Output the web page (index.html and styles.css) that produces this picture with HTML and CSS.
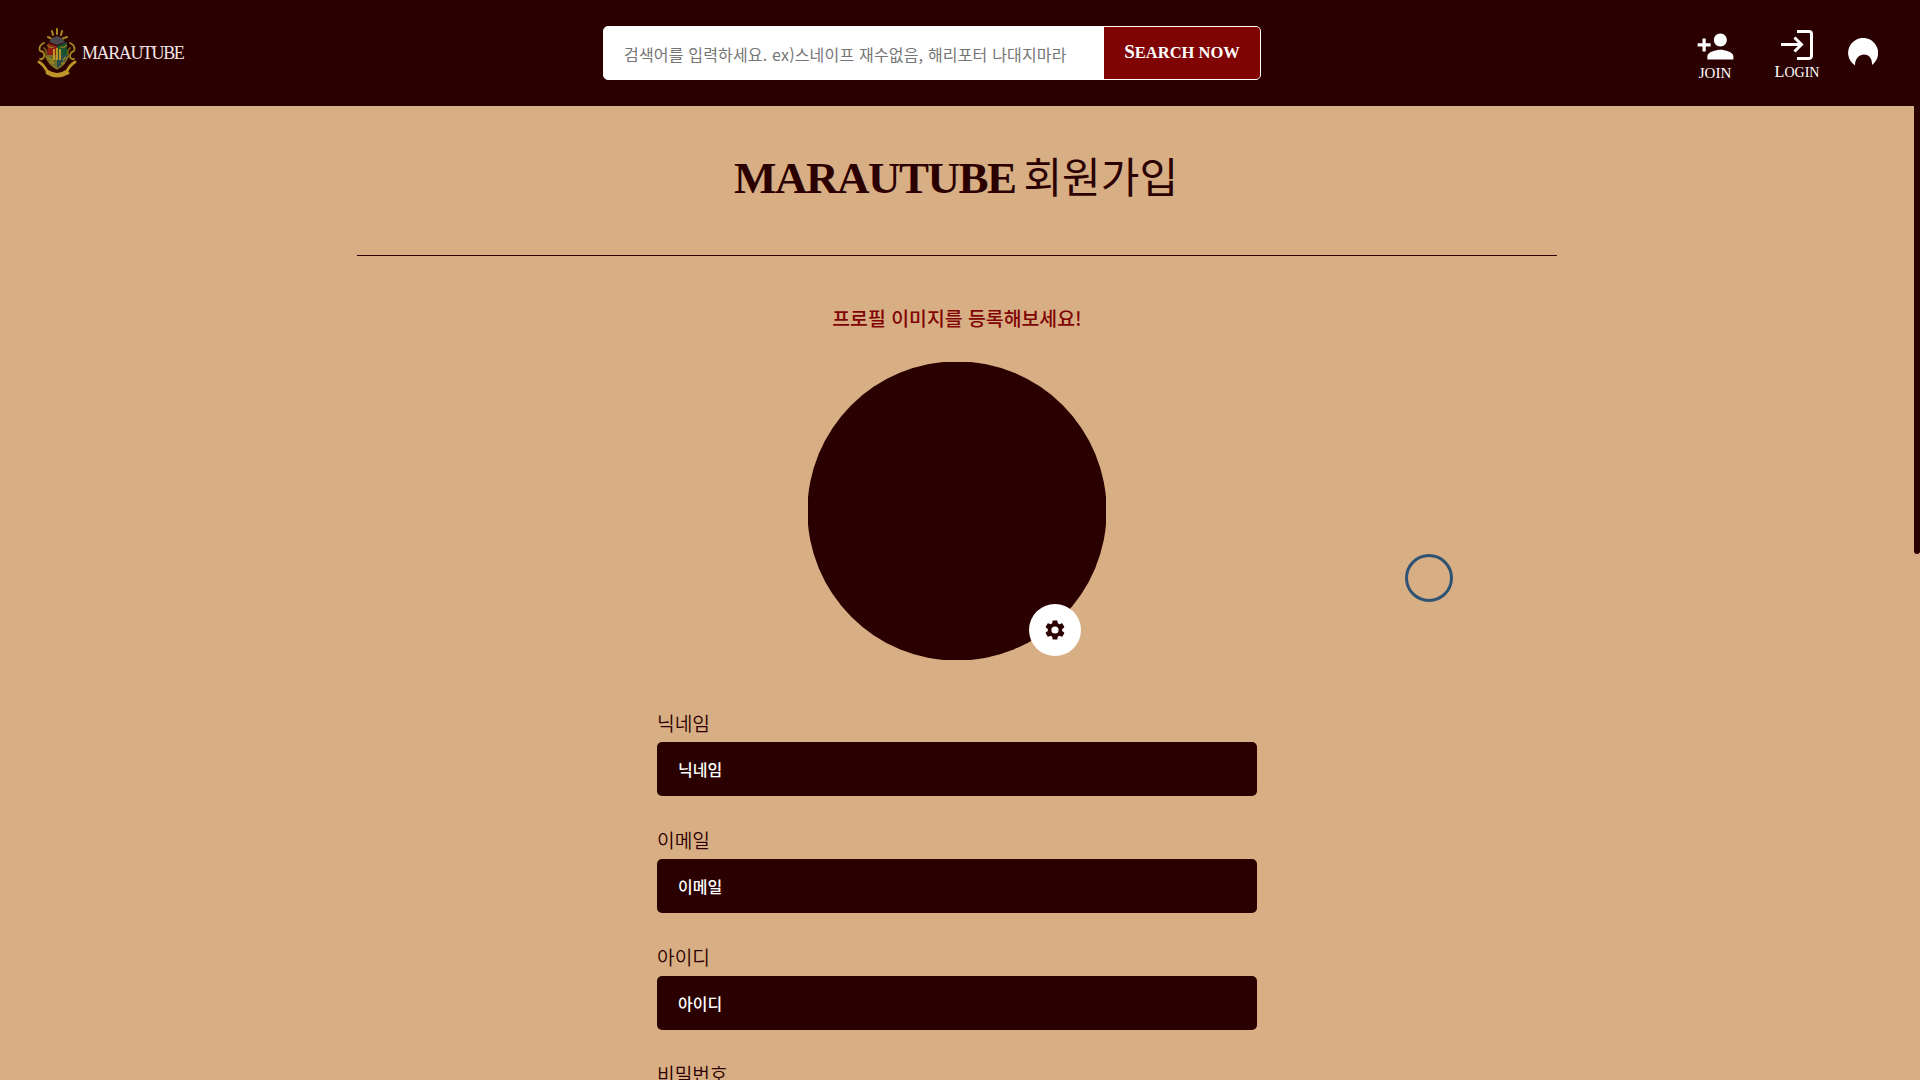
FILE: index.html
```html
<!DOCTYPE html>
<html lang="ko">
<head>
<meta charset="utf-8">
<title>MARAUTUBE 회원가입</title>
<link rel="stylesheet" href="styles.css">
</head>
<body>
<header class="header">
  <a class="logo">
    <svg class="crest" viewBox="0 0 42 50">
      <g fill="none" stroke="#a98a20" stroke-width="1.8" stroke-linecap="round">
        <path d="M16 3l1 4M21 1v5M26 3l-1 4M12 9l4 2M31 9l-5 2" stroke-width="2" stroke-dasharray="2.500 1"/>
        <path d="M8 15q-6 3-4 8q5 0 4 6q-2 3-4 2M34 15q6 3 4 8q-4 1-4 6q2 3 4 2" stroke-dasharray="4 1"/>
        <path d="M8 20q4 3 1 9M34 20q-4 4-1 9" stroke="#6f5a16"/>
        <path d="M3 34q4 2 8 9q10 7 20 0q3-6 8-9M11 45q10 6 21 0" stroke="#bd9529" stroke-width="2.800"/>
      </g>
      <path d="M16 10l5-2l5 2l3 4l-8 3l-8-3z" fill="#4b484b"/>
      <path d="M12 15l9 3v9H11z" fill="#8f1d13"/>
      <path d="M21 18l10-4v13H21z" fill="#17532f"/>
      <path d="M10 27h11v14Q12 37 10 27z" fill="#6d6d2c"/>
      <path d="M21 27h11q-2 10-11 14z" fill="#2b4c4b"/>
      <path d="M11 17q4 4 7 2M31 17q-4 4-7 2M10 28q2 8 11 13q9-5 11-13" fill="none" stroke="#8c781e" stroke-width="1.300"/>
      <path d="M18 21v11M21 20v12M24 21v11" stroke="#c99d25" stroke-width="1.800"/>
      <path d="M12 30l5 3M27 32l3-3M14 34l4 1M25 36l3-2" stroke="#a98a20" stroke-width="1.300"/>
    </svg>
    <span class="logo-text">MARAUTUBE</span>
  </a>
  <form class="search">
    <input class="search-input" type="text" placeholder="검색어를 입력하세요. ex)스네이프 재수없음, 해리포터 나대지마라">
    <button class="search-button" type="button"><span class="initial">S</span>EARCH NOW</button>
  </form>
  <nav class="menu">
    <a class="menu-item">
      <svg viewBox="0 0 24 24"><path d="M15 12c2.21 0 4-1.79 4-4s-1.79-4-4-4-4 1.79-4 4 1.79 4 4 4zm-9-2V7H4v3H1v2h3v3h2v-3h3v-2H6zm9 4c-2.67 0-8 1.34-8 4v2h16v-2c0-2.66-5.33-4-8-4z"/></svg>
      <span class="join">JOIN</span>
    </a>
    <a class="menu-item">
      <svg class="login-icon" viewBox="0 0 32 30"><path d="M16 1.500h12a2.500 2.500 0 0 1 2.500 2.500v22a2.500 2.500 0 0 1-2.500 2.500H16M0 14.500h20M13.500 7.500l7 7-7 7"/></svg>
      <span class="login"><span class="initial">L</span>OGIN</span>
    </a>
    <svg class="moon" viewBox="0 0 30 30"><path d="M7 27.500A15 15 0 1 1 24 27C25 13 7 13 7 27.500z"/></svg>
  </nav>
</header>
<main class="page">
  <h1 class="title"><span class="brand">MARAUTUBE</span><span>회원가입</span></h1>
  <p class="prompt">프로필 이미지를 등록해보세요!</p>
  <div class="profile">
    <svg class="avatar" viewBox="0 0 298 298"><circle cx="149" cy="149" r="149.600"/></svg>
    <button class="settings" type="button">
      <svg viewBox="0 0 24 24"><path d="M19.140 12.940c.04-.3.060-.61.060-.94s-.02-.64-.07-.94l2.030-1.580a.49.49 0 0 0 .12-.61l-1.920-3.320a.488.488 0 0 0-.59-.22l-2.390.96c-.5-.38-1.030-.7-1.620-.94l-.36-2.540a.484.484 0 0 0-.48-.41h-3.840c-.24 0-.43.17-.47.41l-.36 2.540c-.59.24-1.130.57-1.620.94l-2.390-.96c-.22-.08-.47 0-.59.22L2.740 8.870c-.12.21-.08.47.12.61l2.030 1.580c-.05.3-.09.63-.09.94s.02.64.07.94l-2.030 1.580a.49.49 0 0 0-.12.61l1.920 3.320c.12.22.37.29.59.22l2.390-.96c.5.38 1.030.7 1.620.94l.36 2.540c.05.24.24.41.48.41h3.840c.24 0 .44-.17.47-.41l.36-2.540c.59-.24 1.130-.56 1.620-.94l2.390.96c.22.08.47 0 .59-.22l1.920-3.320c.12-.22.070-.47-.12-.61zM12 15.600A3.600 3.600 0 1 1 12 8.400a3.600 3.600 0 0 1 0 7.200z"/></svg>
    </button>
  </div>
  <form class="form">
    <label class="field">닉네임<input type="text" placeholder="닉네임"></label>
    <label class="field">이메일<input type="text" placeholder="이메일"></label>
    <label class="field">아이디<input type="text" placeholder="아이디"></label>
    <label class="field">비밀번호</label>
  </form>
</main>
<div class="scroll-thumb"></div>
<div class="cursor-ring"></div>
</body>
</html>
```
FILE: styles.css
```css
* { box-sizing: border-box; }
body {
  margin: 0;
  height: 1080px;
  overflow: hidden;
  background: #d8ae84;
  color: #2b0000;
  font-family: "Noto Sans CJK KR", sans-serif;
}
input, button { font-family: inherit; border: 0; margin: 0; }
.header {
  height: 106px;
  background: #2b0000;
  display: grid;
  grid-template-columns: 567px 658px 1fr;
  padding: 0 42px 0 36px;
  align-items: center;
}
.logo { display: flex; align-items: center; gap: 4px; }
.crest { width: 42px; height: 50px; }
.logo-text {
  color: #f6e8e8;
  font: 18px/20px "Liberation Serif", serif;
  letter-spacing: -1.400px;
}
.search {
  height: 54px;
  display: flex;
  border: 1px solid #fff;
  border-radius: 5px;
  overflow: hidden;
  background: #fff;
}
.search-input {
  flex: 1;
  padding: 1px 20px 0;
  font-size: 16px;
  letter-spacing: .18px;
  outline: 0;
}
.search-input::placeholder { color: #757575; }
.search-button {
  width: 156px;
  padding: 0 0 2px;
  background: #800404;
  color: #fff;
  font: bold 16.500px "Liberation Serif", serif;
  white-space: nowrap;
}
.initial { font-size: 1.150em; }
.menu { display: flex; justify-content: flex-end; align-items: center; }
.menu-item {
  width: 82px;
  display: flex;
  flex-direction: column;
  align-items: center;
  color: #fff;
  font: 15px/14px "Liberation Serif", serif;
}
.menu-item svg { width: 39px; height: 39px; fill: #fff; }
.menu-item .login-icon {
  width: 32px;
  height: 30px;
  margin: 4px 0 5px;
  fill: none;
  stroke: #fff;
  stroke-width: 3;
}
.login { font-size: 14px; }
.moon { width: 30px; height: 30px; fill: #fff; margin-left: 10px; }
.page {
  width: 1200px;
  margin-left: 357px;
  display: flex;
  flex-direction: column;
  align-items: center;
}
.title {
  width: 100%;
  height: 150px;
  margin: 0;
  border-bottom: 1px solid #2b0000;
  display: flex;
  justify-content: center;
  align-items: baseline;
  gap: 8px;
  padding: 38px 2px 0 0;
  font: 400 42px/62px "Noto Sans CJK KR", sans-serif;
}
.brand {
  font: bold 45px/62px "Liberation Serif", serif;
  letter-spacing: -1.500px;
}
.prompt {
  margin: 48px 0 0;
  font-size: 19.400px;
  line-height: 28px;
  font-weight: 500;
  color: #800404;
}
.profile { position: relative; width: 298px; height: 298px; margin-top: 30px; }
.avatar { display: block; width: 298px; height: 298px; fill: #2b0000; }
.settings {
  position: absolute;
  right: 25px;
  bottom: 4px;
  width: 52px;
  height: 52px;
  padding: 0;
  border-radius: 50%;
  background: #fff;
  display: grid;
  place-items: center;
}
.settings svg { width: 24px; height: 24px; fill: #2b0000; }
.form { width: 600px; margin-top: 51px; display: flex; flex-direction: column; gap: 32px; }
.field { display: flex; flex-direction: column; gap: 7px; font-size: 19.200px; line-height: 24px; font-weight: 350; }
.field input {
  height: 54px;
  padding: 0 21px;
  border-radius: 5px;
  background: #2b0000;
  font-size: 16px;
  font-weight: 500;
}
.field input::placeholder { color: #fff; }
.scroll-thumb {
  position: absolute;
  top: 0;
  right: 0;
  width: 6px;
  height: 554px;
  border-radius: 3px;
  background: #2b0000;
}
.cursor-ring {
  position: absolute;
  left: 1405px;
  top: 554px;
  width: 48px;
  height: 48px;
  border: 3px solid #2f5373;
  border-radius: 50%;
}
```
